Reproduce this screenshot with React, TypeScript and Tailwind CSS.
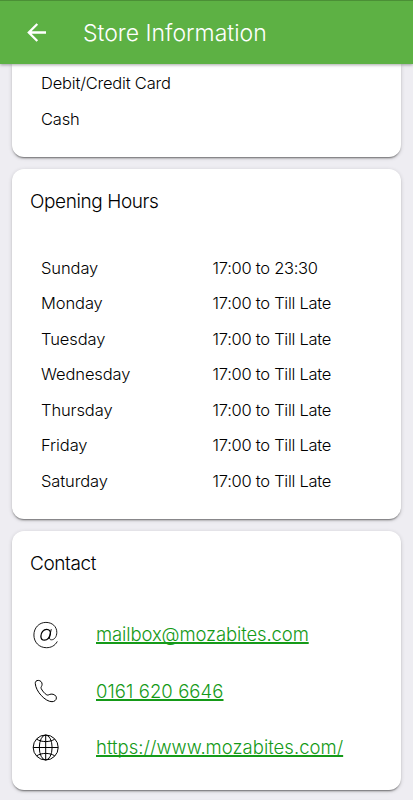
import type { ReactNode } from "react";

const hours = [
  { day: "Sunday", time: "17:00 to 23:30" },
  { day: "Monday", time: "17:00 to Till Late" },
  { day: "Tuesday", time: "17:00 to Till Late" },
  { day: "Wednesday", time: "17:00 to Till Late" },
  { day: "Thursday", time: "17:00 to Till Late" },
  { day: "Friday", time: "17:00 to Till Late" },
  { day: "Saturday", time: "17:00 to Till Late" },
];

function BackIcon() {
  return (
    <svg width="20" height="20" viewBox="0 0 20 20" fill="none" stroke="currentColor" strokeWidth="2.3" aria-hidden>
      <path d="M19 9.5H2.5M10.3 1 1.8 9.5l8.5 8.5" />
    </svg>
  );
}

function AtIcon() {
  return (
    <svg width="28" height="28" viewBox="0 0 28 28" fill="none" stroke="currentColor" strokeLinecap="round" aria-hidden>
      <path
        strokeWidth="0.9"
        d="M25.1 20.8C22.9 24.9 18.9 26.7 14.4 26.7 7.1 26.7 1.9 21.2 1.9 14S7.1 1.4 13.9 1.4c6.4 0 10.9 4.2 10.9 9.9 0 4.3-2.3 7.5-5.3 7.5-1.7 0-2.3-1.1-1.9-2.9l1.6-7.4"
      />
      <path
        strokeWidth="1.3"
        d="M18.3 13.2c-.8 3.6-3.3 6-5.8 6-2.3 0-3.6-1.6-3.6-4 0-3.8 2.7-6.9 5.8-6.9 2.6 0 4.2 1.9 3.6 4.9Z"
      />
    </svg>
  );
}

function PhoneIcon() {
  return (
    <svg width="28" height="28" viewBox="0 0 28 28" fill="none" stroke="currentColor" strokeWidth="1" strokeLinejoin="round" aria-hidden>
      <path d="M3.3 6.7C3 4.500 4.500 3.300 6.300 3.400c2.300.1 3.800 1.800 3.800 3.900 0 2-1.500 2.600-1 4 .8 2 3.600 5.500 5.700 6.600 1.500.7 2.300-.6 4.300-.8 2.700-.2 5.300 1.400 5.300 3.800 0 2.300-2.200 3.800-4.400 3.800C13.200 24.700 3.800 14.300 3.300 6.700Z" />
    </svg>
  );
}

function GlobeIcon() {
  return (
    <svg width="28" height="28" viewBox="0 0 28 28" fill="none" stroke="currentColor" strokeWidth="1" aria-hidden>
      <circle cx="13.7" cy="13.5" r="12.5" />
      <ellipse cx="13.7" cy="13.5" rx="6.4" ry="12.5" />
      <path d="M13.7 1v25M1.2 13.5h25M4.7 5.2c5 3.2 13 3.2 18 0M4.7 21.8c5-3.2 13-3.2 18 0" />
    </svg>
  );
}

const contacts = [
  {
    icon: <AtIcon />,
    label: "mailbox@mozabites.com",
    href: "mailto:mailbox@mozabites.com",
    tracking: "tracking-[-0.12px]",
  },
  { icon: <PhoneIcon />, label: "0161 620 6646", href: "tel:01616206646", tracking: "tracking-[0.08px]" },
  {
    icon: <GlobeIcon />,
    label: "https://www.mozabites.com/",
    href: "https://www.mozabites.com/",
    tracking: "tracking-[0.02px]",
  },
];

function Card({ title, className, children }: { title?: string; className?: string; children?: ReactNode }) {
  return (
    <section
      className={`shrink-0 bg-white shadow-[0_2px_2px_-1px_rgba(0,0,0,0.5),0_1px_4px_rgba(0,0,0,0.16)] ${className ?? ""}`}
    >
      {title && <h2 className="pt-[19px] pl-[18px] text-[19px] leading-7 tracking-[-0.4px]">{title}</h2>}
      {children}
    </section>
  );
}

export default function App() {
  return (
    <div className="flex h-[800px] w-full flex-col overflow-hidden bg-[#eeedf2] font-['Inter',sans-serif] font-light text-black">
      <header className="z-10 flex h-16 shrink-0 items-center border-t border-[#4b8f36] bg-[#5db144] pl-[27px] text-white shadow-[0_1px_3px_rgba(0,0,0,0.35)]">
        <BackIcon />
        <h1 className="ml-9 text-[23px] leading-8">Store Information</h1>
      </header>

      <main className="flex flex-col gap-3 px-3">
        <Card className="h-[93px] rounded-b-xl pt-0.5">
          {["Debit/Credit Card", "Cash"].map((method) => (
            <p key={method} className="flex h-[35.5px] items-center pl-[29px] text-[16.5px] tracking-[-0.2px]">
              {method}
            </p>
          ))}
        </Card>

        <Card title="Opening Hours" className="h-[350px] rounded-xl">
          <dl className="mt-[34.5px]">
            {hours.map(({ day, time }) => (
              <div key={day} className="flex h-[35.5px] items-center pl-[29px] text-[16.5px]">
                <dt className="w-[171.5px] tracking-[-0.1px]">{day}</dt>
                <dd className="tracking-[-0.27px]">{time}</dd>
              </div>
            ))}
          </dl>
        </Card>

        <Card title="Contact" className="h-[259px] rounded-xl">
          <ul className="mt-[29px]">
            {contacts.map(({ icon, label, href, tracking }) => (
              <li key={label} className="flex h-[56.3px] items-center pl-5">
                {icon}
                <a
                  href={href}
                  className={`ml-9 text-[18.5px] text-[#159a18] underline decoration-2 underline-offset-1 [text-decoration-skip-ink:none] ${tracking}`}
                >
                  {label}
                </a>
              </li>
            ))}
          </ul>
        </Card>

        <Card className="h-20 rounded-xl" />
      </main>
    </div>
  );
}
